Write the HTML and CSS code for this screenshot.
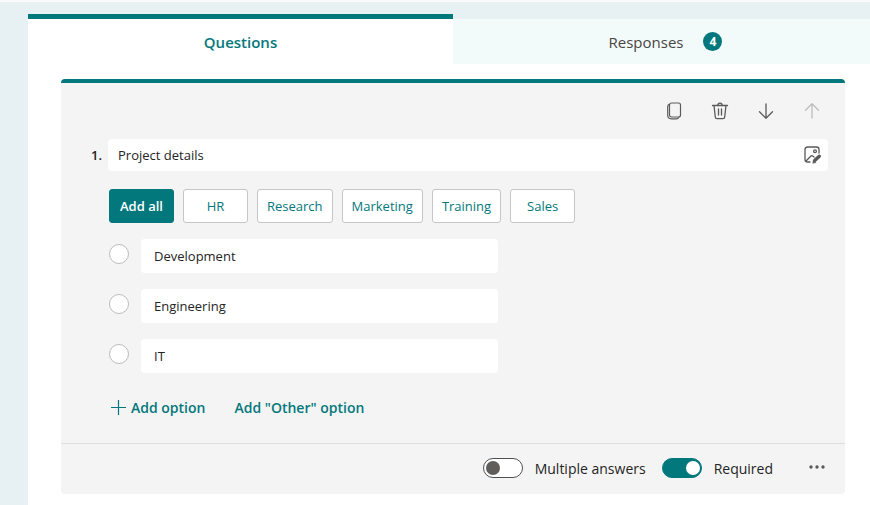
FILE: index.html
```
<!DOCTYPE html>
<html lang="en">

<head>
    <meta charset="UTF-8">
    <meta name="viewport" content="width=device-width, initial-scale=1.0">
    <title>Project details form</title>
    <link rel="stylesheet" href="styles.css">
</head>

<body>
    <div class="page">
        <nav class="tabs">
            <button type="button" class="tab active">Questions</button>
            <button type="button" class="tab">Responses <span class="badge">4</span></button>
        </nav>

        <main class="content">
            <section class="card">
                <div class="card-body">
                    <div class="toolbar">
                        <button type="button" class="icon-btn" aria-label="Copy question">
                            <svg width="20" height="20" viewBox="0 0 20 20" fill="none" stroke="currentColor" stroke-width="1.2">
                                <rect x="5.5" y="2" width="11" height="14" rx="2" />
                                <path d="M5.5 3 C4.2 3.6 3.7 4.4 3.7 5.8 V14 C3.7 16.6 5 17.8 7.4 17.8 H12.4 C13.6 17.8 14.4 17.2 14.8 16.2" />
                            </svg>
                        </button>
                        <button type="button" class="icon-btn" aria-label="Delete question">
                            <svg width="20" height="20" viewBox="0 0 20 20" fill="none" stroke="currentColor" stroke-width="1.3" stroke-linecap="round">
                                <path d="M2.5 4.5 H17.5 M7.8 4.3 C7.8 1.3 12.2 1.3 12.2 4.3 M4 4.5 L5.3 16 C5.4 17 6 17.6 7 17.6 H13 C14 17.6 14.6 17 14.7 16 L16 4.5 M8.5 8 V14 M11.5 8 V14" />
                            </svg>
                        </button>
                        <button type="button" class="icon-btn" aria-label="Move question down">
                            <svg width="20" height="20" viewBox="0 0 20 20" fill="none" stroke="currentColor" stroke-width="1.3" stroke-linecap="round" stroke-linejoin="round">
                                <path d="M10 3 V17 M3.5 10.8 L10 17.3 L16.5 10.8" />
                            </svg>
                        </button>
                        <button type="button" class="icon-btn" aria-label="Move question up" disabled>
                            <svg width="20" height="20" viewBox="0 0 20 20" fill="none" stroke="currentColor" stroke-width="1.3" stroke-linecap="round" stroke-linejoin="round">
                                <path d="M10 17 V3 M3.5 9.2 L10 2.7 L16.5 9.2" />
                            </svg>
                        </button>
                    </div>

                    <div class="question">
                        <label class="number" for="question-title">1.</label>
                        <div class="title-box">
                            <input type="text" id="question-title" class="title-input" value="Project details">
                            <button type="button" class="icon-btn" aria-label="Insert media">
                                <svg width="20" height="20" viewBox="0 0 20 20" fill="none" stroke="currentColor" stroke-width="1.3" stroke-linecap="round">
                                    <path d="M8 17 H5.5 C3.9 17 3 16.1 3 14.5 V4.5 C3 2.9 3.9 2 5.5 2 H14.5 C16.1 2 17 2.9 17 4.5 V8 M3.8 16.2 L8.7 11.2 C9.5 10.4 10.3 10.4 11.1 11.2 L12 12" />
                                    <circle cx="13" cy="6.2" r="1.4" />
                                    <path d="M12.7 15.6 L17.3 11.2" stroke-width="3.4" />
                                    <path d="M10.8 18 L11.4 15 L13.8 17.3 Z" fill="currentColor" stroke-width="0.6" />
                                </svg>
                            </button>
                        </div>
                    </div>

                    <div class="answers">
                        <div class="suggestions">
                            <button type="button" class="chip primary">Add all</button>
                            <button type="button" class="chip">HR</button>
                            <button type="button" class="chip">Research</button>
                            <button type="button" class="chip">Marketing</button>
                            <button type="button" class="chip">Training</button>
                            <button type="button" class="chip">Sales</button>
                        </div>

                        <div class="option">
                            <input type="radio" name="choice" class="radio" aria-label="Option 1">
                            <input type="text" class="option-input" value="Development" aria-label="Option 1 text">
                        </div>
                        <div class="option">
                            <input type="radio" name="choice" class="radio" aria-label="Option 2">
                            <input type="text" class="option-input" value="Engineering" aria-label="Option 2 text">
                        </div>
                        <div class="option">
                            <input type="radio" name="choice" class="radio" aria-label="Option 3">
                            <input type="text" class="option-input" value="IT" aria-label="Option 3 text">
                        </div>

                        <div class="add-links">
                            <button type="button" class="link-btn">
                                <svg width="16" height="16" viewBox="0 0 16 16" stroke="currentColor" stroke-width="1.2">
                                    <path d="M8.5 1 V16 M1 8.5 H16" />
                                </svg>
                                Add option
                            </button>
                            <button type="button" class="link-btn">Add "Other" option</button>
                        </div>
                    </div>
                </div>

                <footer class="card-footer">
                    <label class="switch">
                        <input type="checkbox" role="switch" class="toggle">
                        Multiple answers
                    </label>
                    <label class="switch">
                        <input type="checkbox" role="switch" class="toggle" checked>
                        Required
                    </label>
                    <button type="button" class="icon-btn more" aria-label="More settings">
                        <svg width="20" height="20" viewBox="0 0 20 20" fill="currentColor">
                            <circle cx="4" cy="9" r="1.7" />
                            <circle cx="10" cy="9" r="1.7" />
                            <circle cx="16" cy="9" r="1.7" />
                        </svg>
                    </button>
                </footer>
            </section>
        </main>
    </div>
</body>

</html>
```
FILE: styles.css
```
* {
    box-sizing: border-box;
}

body {
    margin: 0;
    min-height: 100vh;
    display: flex;
    flex-direction: column;
    overflow: hidden;
    border-top: 2px solid #faf9fb;
    background: #e7f0f3;
    color: #242424;
    font-family: "Open Sans", "Noto Sans", sans-serif;
    font-size: 13px;
}

button,
input {
    font: inherit;
    color: inherit;
}

button {
    padding: 0;
    border: none;
    background: none;
    cursor: pointer;
}

svg {
    display: block;
}

/* the sheet runs slightly past the right edge of the window */
.page {
    flex: 1;
    margin: 12px -8px 0 28px;
    display: flex;
    flex-direction: column;
}

.tabs {
    display: grid;
    grid-template-columns: 1fr 1fr;
}

.tab {
    display: flex;
    align-items: center;
    justify-content: center;
    gap: 20px;
    height: 50px;
    border-top: 5px solid #e7f0f3;
    background: #f3fafa;
    color: #484644;
    font-size: 15px;
}

.tab.active {
    border-top-color: #03787c;
    background: #fff;
    color: #03787c;
    font-weight: 600;
}

.badge {
    width: 19px;
    height: 19px;
    border-radius: 50%;
    background: #03787c;
    color: #fff;
    font-size: 12px;
    font-weight: 700;
    line-height: 19px;
}

.content {
    flex: 1;
    padding: 15px 33px 11px;
    background: #fff;
}

.card {
    border-top: 4px solid #03787c;
    border-radius: 4px;
    background: #f4f4f4;
}

.card-body {
    padding: 18px 17px 24px 30px;
}

.toolbar {
    display: flex;
    justify-content: flex-end;
    gap: 26px;
    padding-right: 6px;
}

.icon-btn {
    color: #5a5a5a;
}

.icon-btn:disabled {
    color: #bdbdbd;
}

.question {
    display: flex;
    align-items: center;
    margin-top: 18px;
}

.number {
    width: 17px;
    font-weight: 600;
}

.title-box {
    flex: 1;
    display: flex;
    align-items: center;
    height: 32px;
    padding: 0 6px 0 10px;
    border-radius: 4px;
    background: #fff;
}

.title-input {
    flex: 1;
    padding: 0;
    border: none;
    background: none;
}

.answers {
    padding: 18px 0 0 18px;
}

.suggestions {
    display: flex;
    gap: 9px;
}

.chip {
    min-width: 65px;
    height: 34px;
    padding: 0 9px;
    border: 1px solid #c6c6c6;
    border-radius: 3px;
    background: #fff;
    color: #03787c;
}

.chip.primary {
    border-color: #03787c;
    background: #03787c;
    color: #fff;
    font-weight: 600;
}

.option {
    display: flex;
    gap: 12px;
    margin-top: 16px;
}

.radio {
    appearance: none;
    width: 20px;
    height: 20px;
    margin: 5px 0 0;
    border: 1px solid #bdbdbd;
    border-radius: 50%;
    background: #fff;
}

.option-input {
    width: 50%;
    max-width: 357px;
    height: 34px;
    padding: 0 13px;
    border: none;
    border-radius: 4px;
    background: #fff;
}

.add-links {
    display: flex;
    gap: 28px;
    margin-top: 23px;
}

.link-btn {
    display: flex;
    align-items: center;
    gap: 5px;
    height: 22px;
    padding-left: 1px;
    color: #03787c;
    font-size: 14px;
    font-weight: 600;
}

.card-body {
    padding-bottom: 25px;
}

.card-footer {
    display: flex;
    align-items: center;
    justify-content: flex-end;
    gap: 16px;
    height: 51px;
    padding: 0 18px 2px 0;
    border-top: 1px solid #dedede;
}

.switch {
    display: flex;
    align-items: center;
    gap: 12px;
    font-size: 14px;
}

.toggle {
    appearance: none;
    display: flex;
    align-items: center;
    width: 40px;
    height: 20px;
    margin: 0;
    padding: 0 2px;
    border: 1px solid #505050;
    border-radius: 10px;
    background: #fff;
}

.toggle::before {
    content: "";
    width: 14px;
    height: 14px;
    border-radius: 50%;
    background: #605e5c;
}

.toggle:checked {
    justify-content: flex-end;
    padding: 0 1px;
    border-color: #03787c;
    background: #03787c;
}

.toggle:checked::before {
    background: #fff;
}

.more {
    margin-left: 18px;
}
```
